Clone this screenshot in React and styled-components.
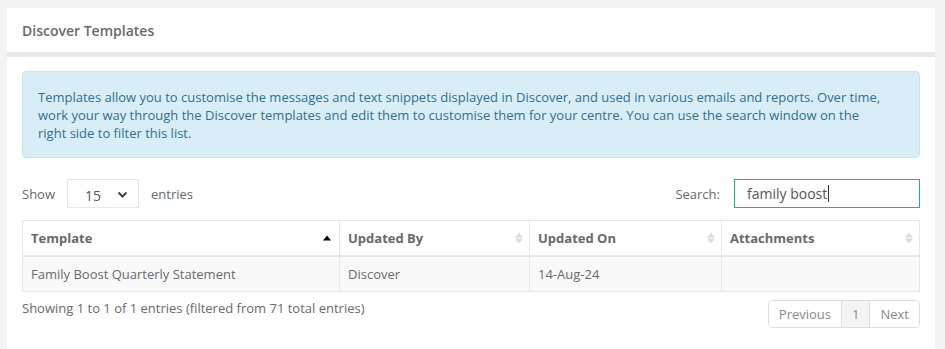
import React from 'react'
import styled, { createGlobalStyle } from 'styled-components'

const GlobalStyle = createGlobalStyle`
    html, body {
        margin: 0;
        padding: 0;
        background: #f3f3f4;
    }
    body {
        font-family: 'Open Sans', 'Liberation Sans', sans-serif;
        font-size: 13px;
        color: #676a6c;
    }
`

const Page = styled.div`
    padding: 8px 10px 0 7px;
    height: 349px;
    box-sizing: border-box;
    overflow: hidden;
`

const Panel = styled.div`
    background: #fff;
    height: 100%;
`

const PanelTitle = styled.div`
    height: 44px;
    display: flex;
    align-items: center;
    padding: 0 15px;
    border-bottom: 5px solid #e7eaec;
    font-size: 14px;
    font-weight: 600;
`

const PanelBody = styled.div`
    padding: 14px 15px 20px 15px;
`

const Alert = styled.div`
    background: #d9edf7;
    border: 1px solid #bce8f1;
    border-radius: 4px;
    color: #31708f;
    padding: 16px 36px 15px 15px;
    line-height: 18px;
    margin-bottom: 21px;
`

const Controls = styled.div`
    display: flex;
    justify-content: space-between;
    align-items: center;
    margin-bottom: 12px;
`

const Label = styled.label`
    display: flex;
    align-items: center;
    gap: ${p => p.$gap || 12}px;
`

const SelectBox = styled.div`
    width: 72px;
    height: 29px;
    box-sizing: border-box;
    border: 1px solid #e5e6e7;
    display: flex;
    align-items: center;
    justify-content: space-between;
    padding: 3px 10px 0 17px;
    font-size: 14px;
    color: #555;
`

const SearchInput = styled.div`
    width: 186px;
    height: 29px;
    box-sizing: border-box;
    border: 1px solid #1ab394;
    display: flex;
    align-items: center;
    padding: 0 12px;
    font-size: 14px;
    color: #555;
`

const Caret = styled.span`
    display: inline-block;
    width: 1px;
    height: 17px;
    background: #333;
    margin-left: 1px;
`

const Table = styled.table`
    width: 100%;
    table-layout: fixed;
    border-collapse: collapse;
    border: 1px solid #e7e7e7;
`

const HeadCell = styled.th`
    position: relative;
    text-align: left;
    font-weight: 700;
    height: 34px;
    padding: 0 8px;
    border: 1px solid #e7e7e7;
    border-bottom-width: 2px;
    width: ${p => p.$width};
`

const Cell = styled.td`
    height: 34px;
    padding: 0 8px;
    border: 1px solid #e7e7e7;
    background: #f9f9f9;
`

const SortIcon = styled.span`
    position: absolute;
    right: ${p => (p.$active ? '8px' : '6px')};
    top: 50%;
    transform: translateY(-50%);
    display: flex;
    flex-direction: column;
    gap: 1px;
`

const Arrow = styled.span`
    width: 0;
    height: 0;
    border-left: ${p => p.$w}px solid transparent;
    border-right: ${p => p.$w}px solid transparent;
    ${p => (p.$up ? 'border-bottom' : 'border-top')}: ${p => p.$h}px solid ${p => p.$color};
`

const Footer = styled.div`
    display: flex;
    justify-content: space-between;
    align-items: flex-start;
    padding-top: 8px;
`

const Info = styled.div`
    margin-top: -1px;
`

const Pagination = styled.div`
    display: flex;
    border: 1px solid #ddd;
    border-radius: 4px;
    overflow: hidden;
`

const PageButton = styled.span`
    height: 26px;
    display: flex;
    align-items: center;
    padding: 0 ${p => p.$pad}px;
    color: #8a8a8a;
    background: ${p => (p.$current ? '#f4f4f4' : '#fff')};
    border-left: ${p => (p.$first ? 'none' : '1px solid #ddd')};
`

const Sort = ({ active }) =>
    active ? (
        <SortIcon $active>
            <Arrow $up $w={4.5} $h={5} $color="#000" />
        </SortIcon>
    ) : (
        <SortIcon>
            <Arrow $up $w={4} $h={5} $color="#dcdcdc" />
            <Arrow $w={4} $h={5} $color="#dcdcdc" />
        </SortIcon>
    )

const columns = [
    { title: 'Template', width: '300px', active: true },
    { title: 'Updated By', width: '173px' },
    { title: 'Updated On', width: '175px' },
    { title: 'Attachments', width: 'auto' },
]

const App = () => (
    <Page>
        <GlobalStyle />
        <Panel>
            <PanelTitle>Discover Templates</PanelTitle>
            <PanelBody>
                <Alert>
                    Templates allow you to customise the messages and text snippets displayed in Discover, and used in
                    various emails and reports. Over time, work your way through the Discover templates and edit them to
                    customise them for your centre. You can use the search window on the right side to filter this list.
                </Alert>
                <Controls>
                    <Label>
                        Show
                        <SelectBox>
                            15
                            <svg width="11" height="8" viewBox="0 0 11 8">
                                <path d="M1.5 1.5 L5.5 5.5 L9.5 1.5" fill="none" stroke="#444" strokeWidth="2" />
                            </svg>
                        </SelectBox>
                        entries
                    </Label>
                    <Label $gap={14}>
                        Search:
                        <SearchInput>
                            family boost<Caret />
                        </SearchInput>
                    </Label>
                </Controls>
                <Table>
                    <thead>
                        <tr>
                            {columns.map(c => (
                                <HeadCell key={c.title} $width={c.width}>
                                    {c.title}
                                    <Sort active={c.active} />
                                </HeadCell>
                            ))}
                        </tr>
                    </thead>
                    <tbody>
                        <tr>
                            <Cell>Family Boost Quarterly Statement</Cell>
                            <Cell>Discover</Cell>
                            <Cell>14-Aug-24</Cell>
                            <Cell></Cell>
                        </tr>
                    </tbody>
                </Table>
                <Footer>
                    <Info>Showing 1 to 1 of 1 entries (filtered from 71 total entries)</Info>
                    <Pagination>
                        <PageButton $first $pad={10}>Previous</PageButton>
                        <PageButton $current $pad={10}>1</PageButton>
                        <PageButton $pad={10}>Next</PageButton>
                    </Pagination>
                </Footer>
            </PanelBody>
        </Panel>
    </Page>
)

export default App
